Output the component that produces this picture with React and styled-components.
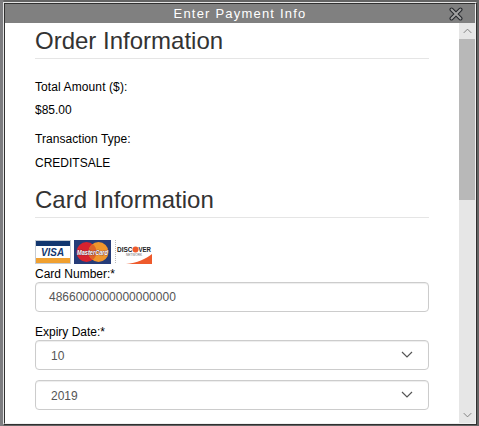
import React from "react";
import styled, { createGlobalStyle } from "styled-components";

const GlobalStyle = createGlobalStyle`
    * {
        box-sizing: border-box;
    }

    body {
        margin: 0;
        overflow: hidden;
        font-family: "Liberation Sans", Arial, sans-serif;
        font-size: 12px;
        color: #000;
    }
`;

const Backdrop = styled.div`
    width: 479px;
    height: 426px;
    padding: 2px 2px 1px 3px;
    background: linear-gradient(90deg, #7d7d80 0, #7d7d80 3px, #646464 4px);
`;

const Frame = styled.div`
    height: 423px;
    border: 1px solid;
    border-color: #e4e4e4 #303030 #303030 #e4e4e4;
`;

const Dialog = styled.div`
    height: 100%;
    display: flex;
    flex-direction: column;
    background: #fff;
    border: 1px solid;
    border-color: #303030 #f0f0f0 #f0f0f0 #303030;
`;

const TitleBar = styled.div`
    height: 19px;
    flex: none;
    display: flex;
    align-items: center;
    background: #808080;
    color: #fff;
    font-size: 13px;
    letter-spacing: 1.2px;
    padding-left: 26px;

    span {
        flex: 1;
        text-align: center;
    }

    svg {
        margin-right: 12px;
    }
`;

const Content = styled.div`
    flex: 1;
    min-height: 0;
    display: flex;
`;

const Form = styled.form`
    flex: 1;
    min-width: 0;
    padding: 0 30px;
`;

const Heading = styled.h2`
    height: 36px;
    margin: ${(props) => props.$top || 0}px 0 0;
    border-bottom: 1px solid #e5e5e5;
    color: #333;
    font-size: 24px;
    font-weight: normal;
    line-height: 36px;
`;

const Line = styled.div`
    margin-top: ${(props) => props.$top}px;
    line-height: 20px;
    letter-spacing: ${(props) => props.$spacing || 0}px;
`;

const Label = styled.label`
    display: block;
    height: 18px;
    line-height: 20px;
`;

const Cards = styled.div`
    display: flex;
    gap: 3px;
    height: 24px;
    margin-top: 22px;

    svg {
        overflow: visible;
    }
`;

const Field = styled.div`
    height: 30px;
    display: flex;
    align-items: center;
    justify-content: space-between;
    margin-bottom: 10px;
    padding: ${(props) => (props.$select ? "2px 15px 0" : "0 13px")};
    border: 1px solid #ccc;
    border-radius: 4px;
    box-shadow: inset 0 1px 1px rgba(0, 0, 0, 0.075);
    color: #555;

    svg {
        margin-top: -3px;
    }
`;

const ScrollBar = styled.div`
    width: 16px;
    display: flex;
    flex-direction: column;
    background: #e6e6e6;
`;

const ScrollButton = styled.div`
    height: 16px;
    display: flex;
    align-items: center;
    justify-content: center;
    margin-top: ${(props) => (props.$last ? "auto" : 0)};
`;

const Thumb = styled.div`
    height: 161px;
    background: #b8b8b8;
`;

const Chevron = ({ width = 12, height = 7, color = "#555", up }) => (
    <svg width={width} height={height} viewBox="0 0 12 7">
        <path d={up ? "M1 6 6 1l5 5" : "M1 1l5 5 5-5"} fill="none" stroke={color} strokeWidth="1.2" />
    </svg>
);

const CloseIcon = () => (
    <svg width="14" height="14" viewBox="0 0 14 14">
        <path d="M2.5 2.5l9 9M11.5 2.5l-9 9" stroke="#25282c" strokeWidth="4" strokeLinecap="round" />
        <path d="M2.5 2.5l9 9M11.5 2.5l-9 9" stroke="#a3a3a3" strokeWidth="1.9" strokeLinecap="round" />
    </svg>
);

const Visa = () => (
    <svg width="36" height="24" viewBox="0 0 36 24">
        <rect width="36" height="24" fill="#c5cbd3" />
        <rect x="1" y="1" width="34" height="22" fill="#fff" />
        <rect x="1" y="1" width="34" height="5" fill="#12366f" />
        <rect x="1" y="18" width="34" height="5" fill="#f0a030" />
        <text x="6" y="16" textLength="23" lengthAdjust="spacingAndGlyphs" fontSize="11" fontWeight="bold" fontStyle="italic" fill="#12366f">VISA</text>
    </svg>
);

const MasterCard = () => (
    <svg width="37" height="24" viewBox="0 0 37 24">
        <rect width="37" height="24" fill="#263c78" />
        <circle cx="12.5" cy="12" r="10" fill="#d8232f" />
        <circle cx="24.5" cy="12" r="10" fill="#f0962c" />
        <path d="M18.5 4a10 10 0 0 1 0 16 10 10 0 0 1 0-16" fill="#df6328" />
        <text x="3" y="15" textLength="31" lengthAdjust="spacingAndGlyphs" fontSize="7.5" fontWeight="bold" fontStyle="italic" fill="#fff" stroke="#5b2740" strokeWidth="0.7" paintOrder="stroke">MasterCard</text>
    </svg>
);

const Discover = () => (
    <svg width="38" height="24" viewBox="0 0 38 24">
        <path d="M1.5 0v24" stroke="#bbb" strokeDasharray="1 1" />
        <path d="M38 14v10H12c11-1 20-5 26-10" fill="#ee5a2c" />
        <text x="3" y="12" textLength="15.5" lengthAdjust="spacingAndGlyphs" fontSize="7" fontWeight="bold" fill="#222">DISC</text>
        <circle cx="21.5" cy="9.5" r="3" fill="#ee5a2c" />
        <text x="24.5" y="12" textLength="12.5" lengthAdjust="spacingAndGlyphs" fontSize="7" fontWeight="bold" fill="#222">VER</text>
        <text x="12" y="16" textLength="16" lengthAdjust="spacingAndGlyphs" fontSize="3" fill="#666">NETWORK</text>
    </svg>
);

const PaymentInfo = () => {

    return (
        <>
        <GlobalStyle />
        <Backdrop>
            <Frame>
                <Dialog>
                    <TitleBar>
                        <span>Enter Payment Info</span>
                        <CloseIcon />
                    </TitleBar>
                    <Content>
                        <Form>
                            <Heading>Order Information</Heading>
                            <Line $top={18} $spacing={0.1}>Total Amount ($):</Line>
                            <Line $top={3}>$85.00</Line>
                            <Line $top={9} $spacing={0.05}>Transaction Type:</Line>
                            <Line $top={4}>CREDITSALE</Line>
                            <Heading $top={9}>Card Information</Heading>
                            <Cards>
                                <Visa />
                                <MasterCard />
                                <Discover />
                            </Cards>
                            <Label>Card Number:*</Label>
                            <Field>4866000000000000000</Field>
                            <Label>Expiry Date:*</Label>
                            <Field $select>10<Chevron /></Field>
                            <Field $select>2019<Chevron /></Field>
                        </Form>
                        <ScrollBar>
                            <ScrollButton><Chevron up width={9} height={6} color="#777" /></ScrollButton>
                            <Thumb />
                            <ScrollButton $last><Chevron width={9} height={6} color="#777" /></ScrollButton>
                        </ScrollBar>
                    </Content>
                </Dialog>
            </Frame>
        </Backdrop>
        </>
    )
}

export default PaymentInfo;
